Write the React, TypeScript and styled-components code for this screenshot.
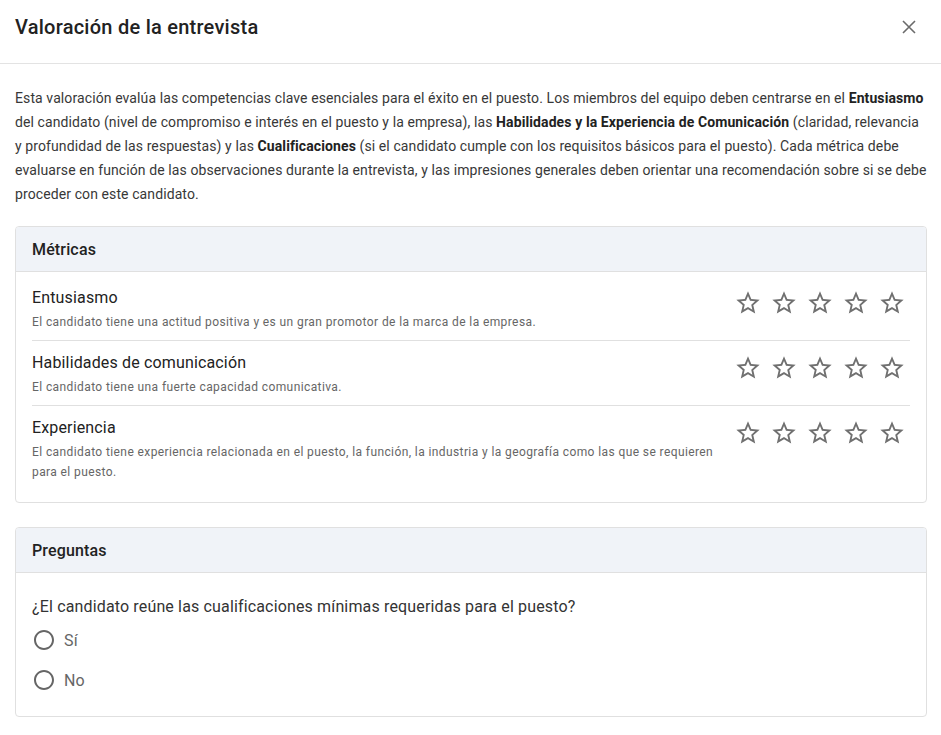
import React from 'react';
import styled, { createGlobalStyle } from 'styled-components';

const metrics = [
  {
    name: 'Entusiasmo',
    description: 'El candidato tiene una actitud positiva y es un gran promotor de la marca de la empresa.',
  },
  {
    name: 'Habilidades de comunicación',
    description: 'El candidato tiene una fuerte capacidad comunicativa.',
  },
  {
    name: 'Experiencia',
    description:
      'El candidato tiene experiencia relacionada en el puesto, la función, la industria y la geografía como las que se requieren para el puesto.',
  },
];

const options = ['Sí', 'No'];

const StarIcon = () => (
  <svg width="28" height="28" viewBox="0 0 24 24" fill="currentColor">
    <path d="M22 9.24l-7.19-.62L12 2 9.19 8.63 2 9.24l5.46 4.73L5.82 21 12 17.27 18.18 21l-1.63-7.03L22 9.24zM12 15.4l-3.76 2.27 1-4.28-3.32-2.88 4.38-.38L12 6.1l1.71 4.04 4.38.38-3.32 2.88 1 4.28L12 15.4z" />
  </svg>
);

const RadioIcon = () => (
  <svg width="24" height="24" viewBox="0 0 24 24" fill="currentColor">
    <path d="M12 2C6.48 2 2 6.48 2 12s4.48 10 10 10 10-4.48 10-10S17.52 2 12 2zm0 18c-4.42 0-8-3.58-8-8s3.58-8 8-8 8 3.58 8 8-3.58 8-8 8z" />
  </svg>
);

export default function App() {
  return (
    <>
      <GlobalStyle />
      <Modal>
        <Header>
          <Title>Valoración de la entrevista</Title>
          <CloseButton aria-label="Cerrar">
            <svg width="14" height="14" viewBox="0 0 14 14">
              <path d="M1 1L13 13M13 1L1 13" stroke="currentColor" strokeWidth="1.6" />
            </svg>
          </CloseButton>
        </Header>
        <Body>
          <Intro>
            Esta valoración evalúa las competencias clave esenciales para el éxito en el puesto. Los miembros del
            equipo deben centrarse en el <b>Entusiasmo</b> del candidato (nivel de compromiso e interés en el puesto y
            la empresa), las <b>Habilidades y la Experiencia de Comunicación</b> (claridad, relevancia y profundidad de
            las respuestas) y las <b>Cualificaciones</b> (si el candidato cumple con los requisitos básicos para el
            puesto). Cada métrica debe evaluarse en función de las observaciones durante la entrevista, y las
            impresiones generales deben orientar una recomendación sobre si se debe proceder con este candidato.
          </Intro>

          <Card>
            <CardHeader>Métricas</CardHeader>
            <MetricList>
              {metrics.map((metric) => (
                <MetricRow key={metric.name}>
                  <MetricText>
                    <MetricName>{metric.name}</MetricName>
                    <MetricDescription>{metric.description}</MetricDescription>
                  </MetricText>
                  <Stars>
                    {[1, 2, 3, 4, 5].map((n) => (
                      <StarButton key={n} aria-label={`${n} estrellas`}>
                        <StarIcon />
                      </StarButton>
                    ))}
                  </Stars>
                </MetricRow>
              ))}
            </MetricList>
          </Card>

          <Card>
            <CardHeader>Preguntas</CardHeader>
            <QuestionBody>
              <Question>¿El candidato reúne las cualificaciones mínimas requeridas para el puesto?</Question>
              {options.map((option) => (
                <RadioRow key={option}>
                  <RadioMark>
                    <RadioIcon />
                  </RadioMark>
                  <RadioLabel>{option}</RadioLabel>
                </RadioRow>
              ))}
            </QuestionBody>
          </Card>
        </Body>
      </Modal>
    </>
  );
}

const GlobalStyle = createGlobalStyle`
  * { box-sizing: border-box; }
  body {
    margin: 0;
    background: #fff;
    font-family: Roboto, "Liberation Sans", Arial, sans-serif;
    color: #333;
  }
`;

const Modal = styled('div')`
  display: flex;
  flex-direction: column;
  width: 941px;
  background: #fff;
`;

const Header = styled('div')`
  display: flex;
  align-items: flex-start;
  justify-content: space-between;
  height: 64px;
  padding: 13px 24px 0 15px;
  border-bottom: 1px solid #e3e3e3;
`;

const Title = styled('h2')`
  margin: 0;
  font-size: 20px;
  line-height: 28px;
  font-weight: 500;
  letter-spacing: 0.25px;
  color: #222;
`;

const CloseButton = styled('button')`
  display: flex;
  align-items: center;
  justify-content: center;
  width: 16px;
  height: 16px;
  margin-top: 6px;
  padding: 0;
  border: none;
  background: none;
  color: #6b6b6b;
  cursor: pointer;
`;

const Body = styled('div')`
  display: flex;
  flex-direction: column;
  gap: 24px;
  padding: 22px 14px 18px 15px;
`;

const Intro = styled('p')`
  margin: 0 0 -4px;
  font-size: 14px;
  line-height: 24px;
  letter-spacing: 0.1px;
  color: #383838;

  b {
    font-weight: 700;
    color: #222;
  }
`;

const Card = styled('div')`
  border: 1px solid #e0e0e0;
  border-radius: 4px;
  overflow: hidden;
`;

const CardHeader = styled('div')`
  display: flex;
  align-items: center;
  height: 45px;
  padding: 0 16px;
  background: #f0f3f8;
  border-bottom: 1px solid #e0e0e0;
  font-size: 16px;
  font-weight: 500;
  letter-spacing: 0.15px;
  color: #222;
`;

const MetricList = styled('div')`
  display: flex;
  flex-direction: column;
  padding: 4px 16px 12px;
`;

const MetricRow = styled('div')`
  display: flex;
  align-items: flex-start;
  justify-content: space-between;
  gap: 12px;
  padding: 10px 0 8px;
  border-bottom: 1px solid #e0e0e0;

  &:last-child {
    border-bottom: none;
  }
`;

const MetricText = styled('div')`
  display: flex;
  flex: 1;
  flex-direction: column;
  gap: 2px;
`;

const MetricName = styled('span')`
  font-size: 16px;
  line-height: 24px;
  letter-spacing: 0.15px;
  color: #222;
`;

const MetricDescription = styled('span')`
  font-size: 12px;
  line-height: 20px;
  letter-spacing: 0.4px;
  color: #666;
`;

const Stars = styled('div')`
  display: flex;
  flex-shrink: 0;
  padding-top: 3px;
`;

const StarButton = styled('button')`
  display: flex;
  align-items: center;
  justify-content: center;
  width: 36px;
  height: 28px;
  padding: 0;
  border: none;
  background: none;
  color: #707070;
  cursor: pointer;
`;

const QuestionBody = styled('div')`
  display: flex;
  flex-direction: column;
  padding: 22px 16px 16px;
`;

const Question = styled('p')`
  margin: 0 0 1px;
  font-size: 16px;
  line-height: 24px;
  letter-spacing: 0.15px;
  color: #333;
`;

const RadioRow = styled('label')`
  display: flex;
  align-items: center;
  gap: 8px;
  height: 40px;
  cursor: pointer;
`;

const RadioMark = styled('span')`
  display: flex;
  color: #666;
`;

const RadioLabel = styled('span')`
  font-size: 16px;
  letter-spacing: 0.15px;
  color: #666;
`;
